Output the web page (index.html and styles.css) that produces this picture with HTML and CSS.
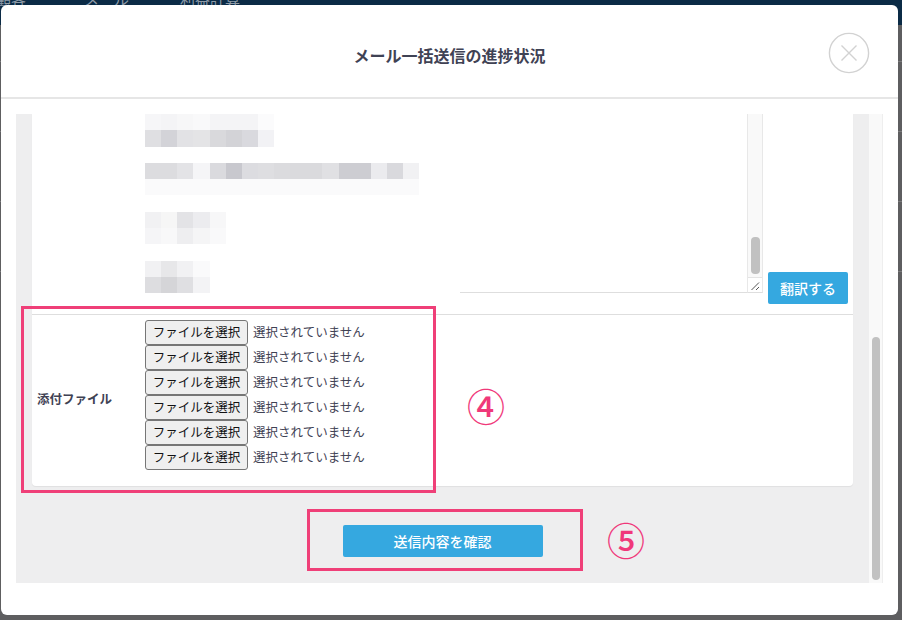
FILE: index.html
```html
<!DOCTYPE html>
<html lang="ja">
<head>
<meta charset="utf-8">
<title>メール一括送信の進捗状況</title>
<link rel="stylesheet" href="styles.css">
</head>
<body>
<div class="backdrop">
  <nav class="topnav"><span class="nav-a">顧客</span><span class="nav-b">メール</span><span class="nav-c">利益計算</span></nav>
  <div class="bg-rows"></div>
</div>
<div class="modal">
  <header class="modal-header">
    <h1 class="modal-title">メール一括送信の進捗状況</h1>
    <svg class="close-icon" width="42" height="42" viewBox="0 0 42 42"><circle cx="21" cy="21" r="19.6" fill="#fff" stroke="#d2d2d2" stroke-width="1.4"/><path d="M13.5 13.5 28.5 28.5M28.5 13.5 13.5 28.5" stroke="#d2d2d2" stroke-width="1.4" fill="none"/></svg>
  </header>
  <div class="modal-body">
    <div class="scroller">
      <div class="content">
        <div class="card">
          <div class="row row-message">
            <div class="textbox">
              <div class="text-area">
                <svg class="mosaic" width="315" height="179" viewBox="0 0 312.5 179" preserveAspectRatio="none" shape-rendering="crispEdges">
                  <g>
                    <rect x="0" y="0" width="16" height="16" fill="#f6f6f8"/><rect x="16" y="0" width="16" height="16" fill="#f4f4f6"/><rect x="32" y="0" width="16" height="16" fill="#f7f7f8"/><rect x="48" y="0" width="16" height="16" fill="#f9f9fa"/><rect x="64" y="0" width="16" height="16" fill="#f4f4f6"/><rect x="80" y="0" width="16" height="16" fill="#f4f4f6"/><rect x="96" y="0" width="16" height="16" fill="#f4f4f6"/><rect x="112" y="0" width="16" height="16" fill="#fbfbfc"/>
                    <rect x="0" y="16" width="16" height="17" fill="#dfdfe2"/><rect x="16" y="16" width="16" height="17" fill="#d3d3d8"/><rect x="32" y="16" width="16" height="17" fill="#e2e2e5"/><rect x="48" y="16" width="16" height="17" fill="#e4e4e6"/><rect x="64" y="16" width="16" height="17" fill="#d9d9dc"/><rect x="80" y="16" width="16" height="17" fill="#d3d3d7"/><rect x="96" y="16" width="16" height="17" fill="#d9d9de"/><rect x="112" y="16" width="16" height="17" fill="#f2f2f5"/>
                  </g>
                  <g>
                    <rect x="0" y="49" width="16" height="16" fill="#dcdcdf"/><rect x="16" y="49" width="16" height="16" fill="#dcdcdf"/><rect x="32" y="49" width="16" height="16" fill="#e3e3e6"/><rect x="48" y="49" width="16" height="16" fill="#f5f5f7"/><rect x="64" y="49" width="16" height="16" fill="#dadade"/><rect x="80" y="49" width="16" height="16" fill="#c8c8ce"/><rect x="96" y="49" width="16" height="16" fill="#dcdce0"/><rect x="112" y="49" width="16" height="16" fill="#dedee1"/><rect x="128" y="49" width="16" height="16" fill="#dbdbde"/><rect x="144" y="49" width="32" height="16" fill="#dadadd"/><rect x="176" y="49" width="16" height="16" fill="#e0e0e3"/><rect x="192" y="49" width="32" height="16" fill="#cdcdd2"/><rect x="224" y="49" width="16" height="16" fill="#ebebee"/><rect x="240" y="49" width="16" height="16" fill="#d9d9dd"/><rect x="256" y="49" width="16" height="16" fill="#f1f1f3"/>
                    <rect x="0" y="65" width="272" height="16" fill="#fafafb"/>
                  </g>
                  <g>
                    <rect x="0" y="98" width="16" height="16" fill="#f1f1f3"/><rect x="16" y="98" width="16" height="16" fill="#f6f6f6"/><rect x="32" y="98" width="16" height="16" fill="#e3e3e6"/><rect x="48" y="98" width="16" height="16" fill="#ececef"/><rect x="64" y="98" width="16" height="16" fill="#f7f7f8"/>
                    <rect x="0" y="114" width="16" height="16" fill="#f5f5f7"/><rect x="16" y="114" width="16" height="16" fill="#f8f8f9"/><rect x="32" y="114" width="16" height="16" fill="#eeeef0"/><rect x="48" y="114" width="16" height="16" fill="#f5f5f6"/><rect x="64" y="114" width="16" height="16" fill="#f9f9fa"/>
                  </g>
                  <g>
                    <rect x="0" y="147" width="16" height="16" fill="#f1f1f3"/><rect x="16" y="147" width="16" height="16" fill="#e7e7e9"/><rect x="32" y="147" width="16" height="16" fill="#f1f1f3"/><rect x="48" y="147" width="16" height="16" fill="#fafafb"/>
                    <rect x="0" y="163" width="16" height="16" fill="#dddde0"/><rect x="16" y="163" width="16" height="16" fill="#d5d5d8"/><rect x="32" y="163" width="16" height="16" fill="#dfdfe2"/><rect x="48" y="163" width="16" height="16" fill="#f3f3f5"/>
                  </g>
                </svg>
                <div class="text-blank"></div>
              </div>
              <div class="text-scroll">
                <div class="text-track"><div class="text-thumb"></div></div>
                <div class="text-corner">
                  <svg width="13" height="14" viewBox="0 0 13 14"><path d="M3.5 12 11 4.5M8 12 11 9" stroke="#555" stroke-width="1" fill="none"/></svg>
                </div>
              </div>
            </div>
            <button class="btn btn-translate" type="button">翻訳する</button>
          </div>
          <div class="row row-files">
            <div class="field-label">添付ファイル</div>
            <div class="file-list">
              <div class="file-row"><button class="file-btn" type="button">ファイルを選択</button><span class="file-note">選択されていません</span></div>
              <div class="file-row"><button class="file-btn" type="button">ファイルを選択</button><span class="file-note">選択されていません</span></div>
              <div class="file-row"><button class="file-btn" type="button">ファイルを選択</button><span class="file-note">選択されていません</span></div>
              <div class="file-row"><button class="file-btn" type="button">ファイルを選択</button><span class="file-note">選択されていません</span></div>
              <div class="file-row"><button class="file-btn" type="button">ファイルを選択</button><span class="file-note">選択されていません</span></div>
              <div class="file-row"><button class="file-btn" type="button">ファイルを選択</button><span class="file-note">選択されていません</span></div>
            </div>
          </div>
        </div>
        <div class="actions"><button class="btn btn-submit" type="button">送信内容を確認</button></div>
      </div>
      <div class="scroll-track"><div class="scroll-thumb"></div></div>
    </div>
  </div>
</div>
<div class="mark mark-files"></div>
<div class="mark mark-submit"></div>
<div class="mark-num num-4">④</div>
<div class="mark-num num-5">⑤</div>
</body>
</html>
```
FILE: styles.css
```css
* { box-sizing: border-box; }
html, body { height: 100%; }
body {
  margin: 0;
  height: 620px;
  overflow: hidden;
  position: relative;
  background: #5e5e60;
  padding: 5px 4px 5px 1px;
  display: flex;
  font-family: "Noto Sans CJK JP", "Noto Sans", sans-serif;
  color: #3f4254;
}
.backdrop { position: absolute; inset: 0; }
.topnav {
  height: 25px;
  background: #0b2b46;
  color: #8d9aa6;
  font-size: 15px;
  line-height: 15px;
  position: relative;
  overflow: hidden;
}
.topnav span { position: absolute; top: -9px; }
.nav-a { left: -4px; }
.nav-b { left: 84px; }
.nav-c { left: 180px; }
.bg-rows {
  height: 255px;
  background: repeating-linear-gradient(to bottom, transparent 0, transparent 36px, #7c7c7e 36px, #7c7c7e 37px, transparent 37px, transparent 70px);
}
.modal {
  position: relative;
  flex: 1;
  background: #fff;
  border-radius: 6px;
  display: flex;
  flex-direction: column;
  overflow: hidden;
}
.modal-header {
  height: 94px;
  flex: none;
  border-bottom: 2px solid #e6e6e6;
  display: flex;
  align-items: center;
  justify-content: center;
  position: relative;
}
.modal-title {
  margin: 0;
  padding-top: 8px;
  font-size: 16px;
  font-weight: 700;
  line-height: 24px;
  color: #3f4254;
}
.close-icon { position: absolute; left: 827px; top: 27px; }
.modal-body { flex: 1; padding: 15px 15px 32px; display: flex; min-height: 0; }
.scroller { flex: 1; display: flex; min-height: 0; overflow: hidden; }
.content { flex: 1; background: #eeeeef; padding: 0 16px; display: flex; flex-direction: column; }
.card {
  background: #fff;
  border-radius: 0 0 4px 4px;
  box-shadow: 0 1px 1px rgba(0, 0, 0, .06);
  height: 372px;
  flex: none;
}
.row-message {
  height: 201px;
  border-bottom: 1px solid #dedede;
  display: flex;
  align-items: flex-start;
  padding-left: 113px;
}
.textbox { width: 618px; height: 179px; display: flex; flex: none; }
.text-area { flex: 1; display: flex; }
.mosaic { display: block; flex: none; }
.text-blank { flex: 1; border-bottom: 1px solid #dedede; }
.text-scroll {
  width: 16px;
  flex: none;
  display: flex;
  flex-direction: column;
  border-left: 1px solid #e8e8e8;
  border-right: 1px solid #e8e8e8;
  border-bottom: 1px solid #dedede;
  background: #f9f9f9;
}
.text-track { flex: 1; display: flex; flex-direction: column; justify-content: flex-end; padding: 0 2px 3px 3px; }
.text-thumb { height: 37px; background: #c1c1c1; border-radius: 4px; }
.text-corner { height: 15px; background: #fff; border-top: 1px solid #e4e4e4; flex: none; }
.text-corner svg { display: block; }
.btn {
  border: 0;
  border-radius: 2px;
  background: #35a8e0;
  color: #fff;
  font-family: inherit;
  padding: 0;
}
.btn-translate {
  width: 80px;
  height: 32px;
  margin: 158px 0 0 5px;
  flex: none;
  font-size: 14px;
  font-weight: 500;
}
.row-files { display: flex; align-items: center; height: 171px; padding: 5px 0 16px 5px; }
.field-label { width: 108px; margin-top: 6px; font-size: 12.5px; font-weight: 700; flex: none; color: #3f4254; }
.file-row { height: 25px; display: flex; align-items: center; gap: 5px; }
.file-btn {
  width: 103px;
  height: 25px;
  padding: 0 0 2px;
  font-family: inherit;
  font-size: 12.5px;
  color: #111;
  background: #efefef;
  border: 1px solid #767676;
  border-radius: 3px;
}
.file-note { font-size: 12.5px; line-height: 23px; padding-bottom: 2px; color: #3f4254; }
.actions { flex: 1; display: flex; justify-content: center; padding-top: 39px; }
.btn-submit { width: 200px; height: 32px; font-size: 14px; font-weight: 500; }
.scroll-track {
  width: 14px;
  flex: none;
  background: #f9f9f9;
  border-right: 1px solid #eeeeee;
  display: flex;
  flex-direction: column;
  justify-content: flex-end;
  padding: 0 2px 3px 3px;
}
.scroll-thumb { height: 243px; background: #c1c1c1; border-radius: 4px; }
.mark { position: absolute; border: 3px solid #ef3f78; }
.mark-files { left: 21px; top: 306px; width: 415px; height: 187px; }
.mark-submit { left: 307px; top: 509px; width: 276px; height: 62px; }
.mark-num {
  position: absolute;
  width: 40px;
  height: 40px;
  font-size: 38px;
  font-weight: 500;
  line-height: 40px;
  text-align: center;
  color: #f0387a;
}
.num-4 { left: 466px; top: 385px; }
.num-5 { left: 606px; top: 519px; }
```
